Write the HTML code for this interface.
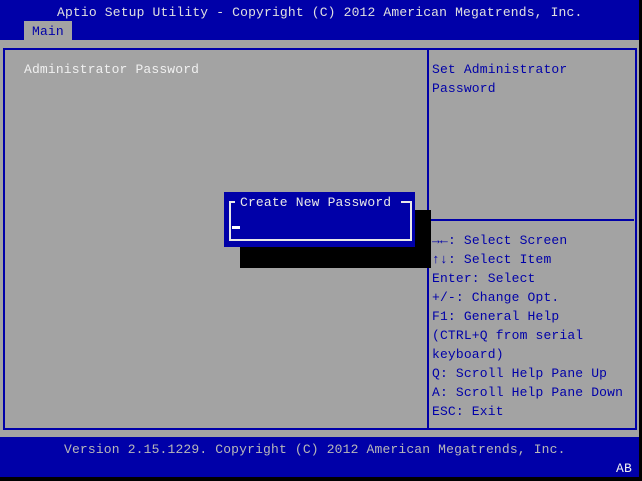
<!DOCTYPE html>
<html><head><style>
body{margin:0;width:642px;height:481px;background:#000;position:relative;overflow:hidden;font-family:"Liberation Mono","DejaVu Sans Mono",monospace;font-size:13px;letter-spacing:0.16px;}
div{position:absolute;box-sizing:border-box;}
.t{white-space:pre;line-height:19px;}
</style></head><body>
<div style="left:0;top:0;width:639px;height:40px;background:#0000a8"></div>
<div style="left:0;top:40px;width:639px;height:397px;background:#a3a3a3"></div>
<div style="left:0;top:437px;width:639px;height:40px;background:#0000a8"></div>
<div class="t" style="left:57px;top:3px;color:#e0e0e0">Aptio Setup Utility - Copyright (C) 2012 American Megatrends, Inc.</div>
<div style="left:24px;top:21px;width:48px;height:19px;background:#a3a3a3"></div>
<div class="t" style="left:32px;top:22px;color:#0000a8">Main</div>
<div style="left:3px;top:48px;width:634px;height:382px;border:2px solid #0000a8"></div>
<div style="left:427px;top:48px;width:2px;height:382px;background:#0000a8"></div>
<div style="left:428px;top:219px;width:206px;height:2px;background:#0000a8"></div>
<div class="t" style="left:24px;top:60px;color:#f0f0f0">Administrator Password</div>
<div class="t" style="left:432px;top:60px;color:#0000a8">Set Administrator
Password</div>
<div class="t" style="left:432px;top:231px;color:#0000a8"><b>→←</b>: Select Screen
<b>↑↓</b>: Select Item
Enter: Select
+/-: Change Opt.
F1: General Help
(CTRL+Q from serial
keyboard)
Q: Scroll Help Pane Up
A: Scroll Help Pane Down
ESC: Exit</div>
<div style="left:240px;top:210px;width:191px;height:58px;background:#000"></div>
<div style="left:224px;top:192px;width:191px;height:55px;background:#0000a8"></div>
<div style="left:229px;top:201px;width:183px;height:40px;border:2px solid #e8e8e8"></div>
<div style="left:235px;top:196px;width:166px;height:10px;background:#0000a8"></div>
<div class="t" style="left:240px;top:193px;color:#e8e8e8">Create New Password</div>
<div style="left:232px;top:226px;width:8px;height:3px;background:#fff"></div>
<div class="t" style="left:64px;top:440px;color:#b8b8b8">Version 2.15.1229. Copyright (C) 2012 American Megatrends, Inc.</div>
<div class="t" style="left:616px;top:459px;color:#f0f0f0">AB</div>
</body></html>
